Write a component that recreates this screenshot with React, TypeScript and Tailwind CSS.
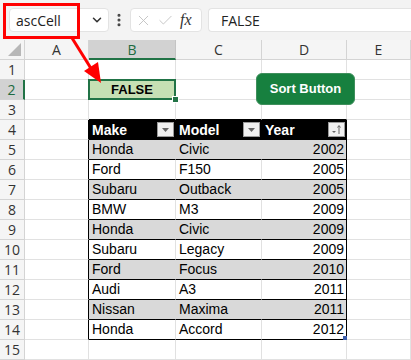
import { ChevronDown, X, Check, EllipsisVertical } from 'lucide-react';

const cols = ['A', 'B', 'C', 'D', 'E'];

const cars = [
  ['Honda', 'Civic', '2002'],
  ['Ford', 'F150', '2005'],
  ['Subaru', 'Outback', '2005'],
  ['BMW', 'M3', '2009'],
  ['Honda', 'Civic', '2009'],
  ['Subaru', 'Legacy', '2009'],
  ['Ford', 'Focus', '2010'],
  ['Audi', 'A3', '2011'],
  ['Nissan', 'Maxima', '2011'],
  ['Honda', 'Accord', '2012'],
];

// filter dropdown in table header
function FilterBtn({ sorted }: { sorted?: boolean }) {
  return (
    <div className="ml-auto mr-[1px] w-[17px] h-[15px] bg-[#f0f0f0] border border-[#9a9a9a] flex items-center justify-center">
      {sorted ? (
        <svg width="11" height="11" viewBox="0 0 11 11">
          <path d="M1 7h4l-2 2z" fill="#666" />
          <path d="M8 10V2M6.5 3.5L8 1.5l1.5 2" stroke="#666" strokeWidth="1" fill="none" />
        </svg>
      ) : (
        <svg width="9" height="6" viewBox="0 0 9 6">
          <path d="M1 1h7l-3.5 4z" fill="#666" />
        </svg>
      )}
    </div>
  );
}

function Cell({ row, col }: { row: number; col: number }) {
  const inTable = row >= 4 && row <= 14 && col >= 1 && col <= 3;

  // =========================
  // TABLE CELLS
  // =========================
  if (inTable) {
    if (row === 4) {
      const label = ['Make', 'Model', 'Year'][col - 1];
      return (
        <div className="h-[20px] bg-black border-r border-b border-black flex items-center pl-[3px] text-white font-bold">
          <span className="leading-none">{label}</span>
          <FilterBtn sorted={col === 3} />
        </div>
      );
    }

    const gray = row % 2 === 1;
    const value = cars[row - 5][col - 1];
    const right =
      col === 3
        ? 'border-r-black'
        : gray
        ? 'border-r-[#d9d9d9]'
        : 'border-r-[#e1e1e1]';

    return (
      <div
        className={`relative h-[20px] border-r border-b border-b-black ${right} ${
          gray ? 'bg-[#d9d9d9]' : 'bg-white'
        } flex items-end pb-[1px] ${col === 3 ? 'justify-end pr-[2px]' : 'pl-[3px]'}`}
      >
        <span className="leading-[17px]">{value}</span>
        {row === 14 && col === 3 && (
          <div className="absolute right-[-1px] bottom-[-1px] w-[4px] h-[4px] bg-[#3b5dab]" />
        )}
      </div>
    );
  }

  // column A borders the table on its right
  const aEdge = col === 0 && row >= 4 && row <= 14;
  const topEdge = row === 3 && col >= 1 && col <= 3;

  if (row === 2 && col === 1) {
    return (
      <div className="relative h-[20px] border-r border-b border-[#e1e1e1] bg-[#c6e0b4] flex items-center justify-center font-bold text-[13px]">
        <span>FALSE</span>
        <div className="absolute left-[-1px] top-[-1px] right-[-1px] bottom-[-1px] border-2 border-[#217346]" />
        <div className="absolute right-[-4px] bottom-[-4px] w-[7px] h-[7px] bg-[#217346] border border-white" />
      </div>
    );
  }

  return (
    <div
      className={`h-[20px] border-r border-b bg-white ${
        aEdge ? 'border-r-black border-b-[#e1e1e1]' : 'border-[#e1e1e1]'
      } ${topEdge ? 'border-b-black' : ''}`}
    />
  );
}

export default function App() {
  return (
    <div className="relative w-[411px] h-[360px] overflow-hidden bg-white" style={{ fontFamily: '"Liberation Sans", Arial, sans-serif' }}>

      {/* FORMULA BAR */}
      <div className="h-[40px] bg-[#f3f3f3] flex items-center" style={{ fontFamily: '"Open Sans", "Noto Sans", sans-serif' }}>
        <div className="ml-[9px] w-[100px] h-[24px] bg-white rounded-[4px] border border-[#e3e3e3] flex items-center pl-[6px] pr-[4px]">
          <span className="text-[14px] text-[#222]">ascCell</span>
          <ChevronDown size={14} strokeWidth={2.6} className="ml-auto text-[#333]" />
        </div>
        <EllipsisVertical size={16} strokeWidth={2.6} className="ml-[2px] text-[#444]" />
        <div className="ml-[3px] w-[72px] h-[24px] bg-white rounded-[4px] border border-[#e3e3e3] flex items-center pl-[4px]">
          <X size={17} strokeWidth={1.3} className="text-[#c2c2c2]" />
          <Check size={17} strokeWidth={1.3} className="ml-[5px] text-[#c2c2c2]" />
          <span className="ml-[6px] text-[16px] italic text-[#333]" style={{ fontFamily: '"Liberation Serif", serif' }}>fx</span>
        </div>
        <div className="ml-[6px] flex-1 h-[24px] bg-white rounded-l-[4px] border border-r-0 border-[#e3e3e3] flex items-center pl-[12px]">
          <span className="text-[14px] text-[#222]">FALSE</span>
        </div>
      </div>

      {/* SHEET */}
      <div className="grid grid-cols-[25px_64px_87px_86px_85px_64px] text-[14px] text-black">

        {/* column headers */}
        <div className="relative h-[20px] bg-[#f5f5f5] border-r border-b border-[#d4d4d4]">
          <div className="absolute right-[3px] bottom-[3px] w-0 h-0 border-l-[13px] border-l-transparent border-b-[13px] border-b-[#b7b7b7]" />
        </div>
        {cols.map((c) => (
          <div
            key={c}
            className={`h-[20px] flex items-center justify-center border-r ${
              c === 'B'
                ? 'bg-[#d2d2d2] text-[#1e6b41] border-r-[#c4c4c4] border-b-2 border-b-[#217346]'
                : 'bg-[#f5f5f5] text-[#333] border-r-[#d4d4d4] border-b border-b-[#d4d4d4]'
            }`}
            style={{ fontFamily: '"Open Sans", "Noto Sans", sans-serif' }}
          >
            {c}
          </div>
        ))}

        {Array.from({ length: 15 }, (_, i) => i + 1).map((row) => (
          <div key={row} className="contents">
            <div
              className={`h-[20px] flex items-center justify-center border-b border-[#d4d4d4] ${
                row === 2
                  ? 'bg-[#d2d2d2] text-[#1e6b41] border-r-2 border-r-[#217346]'
                  : 'bg-[#f5f5f5] text-[#333] border-r'
              }`}
              style={{ fontFamily: '"Open Sans", "Noto Sans", sans-serif' }}
            >
              {row}
            </div>
            {cols.map((_, col) => (
              <Cell key={col} row={row} col={col} />
            ))}
          </div>
        ))}
      </div>

      {/* SHAPE: SORT BUTTON */}
      <div className="absolute left-[256px] top-[73px] w-[99px] h-[32px] rounded-[6px] bg-[#17803f] border border-[#3f8f5c] flex items-center justify-center text-white font-bold text-[13px]">
        Sort Button
      </div>

      {/* CALLOUT */}
      <div className="absolute left-[3px] top-[3px] w-[77px] h-[36px] border-[3px] border-[#ff0000]" />
      <svg className="absolute left-0 top-0" width="120" height="100" viewBox="0 0 120 100">
        <line x1="72" y1="38" x2="92" y2="70" stroke="#ff0000" strokeWidth="3" />
        <path d="M101 83 L84 71 L98 62 Z" fill="#ff0000" />
      </svg>
    </div>
  );
}
